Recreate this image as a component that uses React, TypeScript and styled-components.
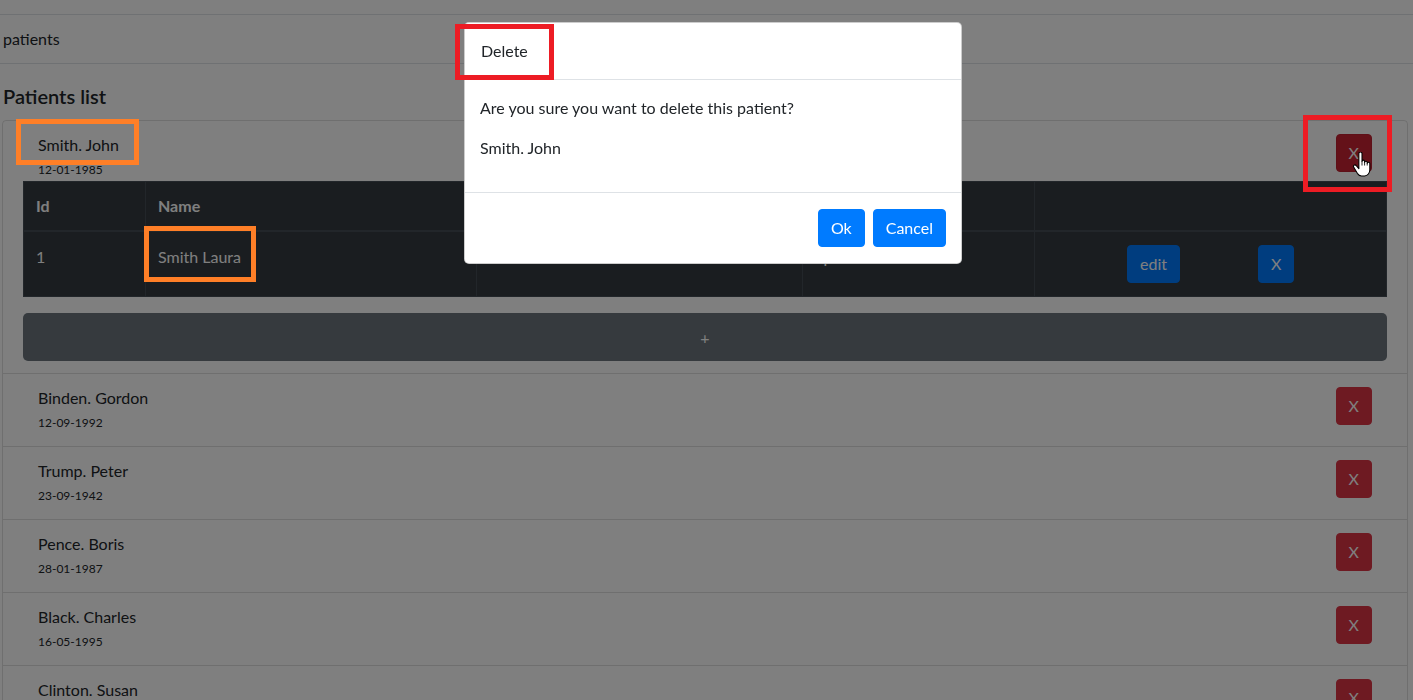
import React from "react";
import styled, { createGlobalStyle } from "styled-components";

const Global = createGlobalStyle`
  html, body { margin: 0; padding: 0; background: #fff; overflow: hidden; }
  body {
    font-family: Lato, "Noto Sans", sans-serif;
    font-size: 16px;
    line-height: 1.5;
    color: #212529;
  }
  * { box-sizing: border-box; }
`;

const Page = styled.div`
  position: relative;
  height: 700px;
  overflow: hidden;
`;

const TopStrip = styled.div`
  height: 15px;
  border-bottom: 1px solid #dee2e6;
`;

const Crumb = styled.div`
  height: 49px;
  display: flex;
  align-items: center;
  padding-left: 3px;
  border-bottom: 1px solid #dee2e6;
`;

const Content = styled.div`
  padding: 0 5px 0 2px;
`;

const Title = styled.h5`
  margin: 20px 0 12px 1px;
  font-size: 20px;
  line-height: 24px;
  font-weight: 600;
`;

const List = styled.div`
  border: 1px solid rgba(0, 0, 0, 0.125);
  border-radius: 4px;
`;

const Item = styled.div<{ $expanded?: boolean }>`
  padding: 13px 20px ${(p) => (p.$expanded ? "12px" : "14px")};
  border-bottom: 1px solid rgba(0, 0, 0, 0.125);
`;

const ItemHead = styled.div`
  display: flex;
  justify-content: space-between;
  align-items: flex-start;
  padding: 0 15px;
`;

const Name = styled.div`
  font-size: 16px;
  line-height: 22px;
`;

const Dob = styled.div`
  font-size: 12px;
  line-height: 18px;
  margin-top: 5px;
`;

const Btn = styled.button<{ $variant: "danger" | "primary" | "dangerHover" }>`
  font-family: inherit;
  font-size: 16px;
  line-height: 24px;
  padding: 6px 12px;
  border-radius: 4px;
  border: 1px solid
    ${(p) => (p.$variant === "primary" ? "#007bff" : p.$variant === "danger" ? "#dc3545" : "#bd2130")};
  background: ${(p) => (p.$variant === "primary" ? "#007bff" : p.$variant === "danger" ? "#dc3545" : "#c82333")};
  color: #fff;
  cursor: pointer;
`;

const Table = styled.table`
  width: 100%;
  margin-top: 2px;
  margin-bottom: 16px;
  border-collapse: collapse;
  background: #343a40;
  color: #fff;
`;

const Th = styled.th`
  text-align: left;
  font-weight: 700;
  padding: 12px;
  border: 1px solid #454d55;
  border-bottom-width: 2px;
`;

const Td = styled.td`
  padding: 13px 12px;
  border: 1px solid #454d55;
  vertical-align: top;
`;

const Actions = styled.div`
  display: flex;
  gap: 78px;
  padding-left: 80px;
`;

const AddButton = styled.button`
  display: block;
  width: 100%;
  height: 48px;
  border: none;
  border-radius: 5px;
  background: #6c757d;
  color: #fff;
  font-family: inherit;
  font-size: 16px;
`;

const Backdrop = styled.div`
  position: fixed;
  inset: 0;
  background: rgba(0, 0, 0, 0.5);
`;

const Modal = styled.div`
  position: absolute;
  top: 22px;
  left: 464px;
  width: 498px;
  background: #fff;
  border: 1px solid rgba(0, 0, 0, 0.2);
  border-radius: 5px;
`;

const ModalHeader = styled.div`
  padding: 16px;
  line-height: 24px;
  border-bottom: 1px solid #dee2e6;
`;

const ModalBody = styled.div`
  padding: 16px 15px;
  p { margin: 0 0 16px; }
`;

const ModalFooter = styled.div`
  display: flex;
  justify-content: flex-end;
  gap: 8px;
  padding: 16px 15px;
  border-top: 1px solid #dee2e6;
`;

const Mark = styled.div<{ $color: string }>`
  position: absolute;
  border: 5px solid ${(p) => p.$color};
  pointer-events: none;
`;

const Cursor = styled.svg`
  position: absolute;
  left: 1352px;
  top: 152px;
`;

const patients = [
  { name: "Binden. Gordon", dob: "12-09-1992" },
  { name: "Trump. Peter", dob: "23-09-1942" },
  { name: "Pence. Boris", dob: "28-01-1987" },
  { name: "Black. Charles", dob: "16-05-1995" },
  { name: "Clinton. Susan", dob: "03-11-1970" },
];

export default function App() {
  return (
    <Page>
      <Global />
      <TopStrip />
      <Crumb>patients</Crumb>
      <Content>
        <Title>Patients list</Title>
        <List>
          <Item $expanded>
            <ItemHead>
              <div>
                <Name>Smith. John</Name>
                <Dob>12-01-1985</Dob>
              </div>
              <Btn $variant="dangerHover">X</Btn>
            </ItemHead>
            <Table>
              <colgroup>
                <col style={{ width: 122 }} />
                <col style={{ width: 331 }} />
                <col style={{ width: 326 }} />
                <col style={{ width: 232 }} />
                <col />
              </colgroup>
              <thead>
                <tr>
                  <Th>Id</Th>
                  <Th>Name</Th>
                  <Th>Birth date</Th>
                  <Th>Relation</Th>
                  <Th></Th>
                </tr>
              </thead>
              <tbody>
                <tr>
                  <Td>1</Td>
                  <Td>Smith Laura</Td>
                  <Td>10-05-2010</Td>
                  <Td>Spouse</Td>
                  <Td>
                    <Actions>
                      <Btn $variant="primary">edit</Btn>
                      <Btn $variant="primary">X</Btn>
                    </Actions>
                  </Td>
                </tr>
              </tbody>
            </Table>
            <AddButton>+</AddButton>
          </Item>
          {patients.map((p) => (
            <Item key={p.name}>
              <ItemHead>
                <div>
                  <Name>{p.name}</Name>
                  <Dob>{p.dob}</Dob>
                </div>
                <Btn $variant="danger">X</Btn>
              </ItemHead>
            </Item>
          ))}
        </List>
      </Content>
      <Backdrop />
      <Modal>
        <ModalHeader>Delete</ModalHeader>
        <ModalBody>
          <p>Are you sure you want to delete this patient?</p>
          <p>Smith. John</p>
        </ModalBody>
        <ModalFooter>
          <Btn $variant="primary">Ok</Btn>
          <Btn $variant="primary">Cancel</Btn>
        </ModalFooter>
      </Modal>
      <Mark $color="#ff7f27" style={{ left: 16, top: 119, width: 123, height: 46 }} />
      <Mark $color="#ff7f27" style={{ left: 144, top: 226, width: 112, height: 56 }} />
      <Mark $color="#ed1c24" style={{ left: 455, top: 24, width: 99, height: 56 }} />
      <Mark $color="#ed1c24" style={{ left: 1303, top: 115, width: 89, height: 77 }} />
      <Cursor width="20" height="25" viewBox="0 0 18 24">
        <path
          d="M6 1.5C6 .7 6.7 0 7.5 0S9 .7 9 1.5V9c0-.7.6-1.2 1.3-1.2S11.5 8.3 11.5 9v1c0-.7.6-1.2 1.3-1.2S14 9.3 14 10v1c0-.7.6-1.2 1.3-1.2s1.2.5 1.2 1.2v6c0 3-2 6-5 6h-3c-2 0-3-1-4-2.5L1 14.5c-.4-.7-.2-1.5.5-1.9s1.5-.2 2 .4L6 16Z"
          fill="#fff"
          stroke="#000"
          strokeWidth="1"
          strokeLinejoin="round"
        />
        <path d="M9 9v4M11.5 10v3M14 11v2" stroke="#000" strokeWidth="0.8" fill="none" />
      </Cursor>
    </Page>
  );
}
